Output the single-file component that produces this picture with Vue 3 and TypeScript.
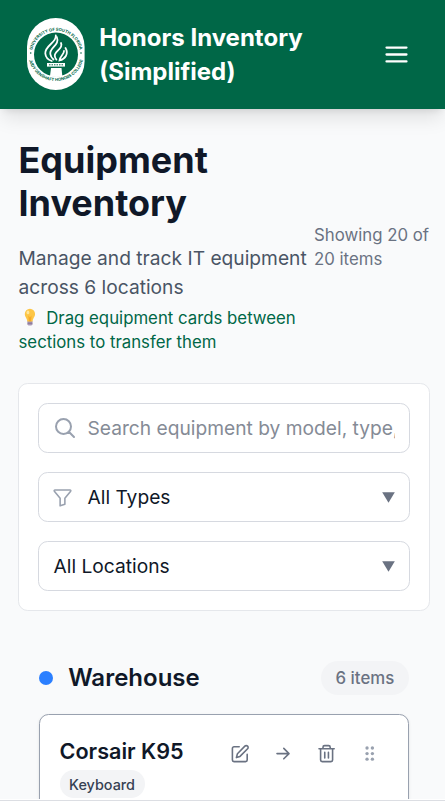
<script setup lang="ts">
import { ref } from 'vue'

interface Equipment {
  name: string
  type: string
}

const search = ref('')
const filters = ref([
  { label: 'All Types', icon: true },
  { label: 'All Locations', icon: false },
])
const items = ref<Equipment[]>([{ name: 'Corsair K95', type: 'Keyboard' }])
</script>

<template>
  <div class="page">
    <header class="header">
      <div class="brand">
        <svg class="seal" viewBox="0 0 58 72" aria-label="University seal">
          <defs>
            <path id="seal-top" d="M5.200 42a24.300 24.300 0 1 1 47.600 0" />
            <path id="seal-bottom" d="M1.500 32a27.700 27.700 0 1 0 55 0" />
          </defs>
          <rect width="57.6" height="72" rx="28.8" fill="#fff" />
          <circle cx="29" cy="36.500" r="22" fill="#006747" />
          <text class="seal-text" text-anchor="middle"><textPath href="#seal-top" startOffset="50%">UNIVERSITY OF SOUTH FLORIDA</textPath></text>
          <text class="seal-text" text-anchor="middle"><textPath href="#seal-bottom" startOffset="50%">JUDY GENSHAFT HONORS COLLEGE</textPath></text>
          <circle cx="3.7" cy="35" r=".8" fill="#006747" />
          <circle cx="54" cy="35" r=".8" fill="#006747" />
          <g fill="none" stroke="#fff" stroke-width="1.8" stroke-linecap="round">
            <path d="M28.800 17.500c1 7-11 10-10.500 18 .4 4 3 6.500 6.500 7.500" />
            <path d="M29.800 19c3.500 8-7.500 10.500-6.500 17 .3 2.500 1.500 4 3.200 5.500" />
            <path d="M34 25c2.800 6-7 8-6.200 13 .2 1.500.8 2.800 1.600 3.600" />
            <path d="M38.500 30c3.500 6-.5 11-6 12.500 .5-4.500 4.500-6 4.500-9.500" />
          </g>
          <path d="M20 45h18v3.600H20z" fill="#fff" />
          <path d="M22 46.800h14" stroke="#006747" stroke-width="1" stroke-dasharray="1.500 1" />
          <path d="M24 50h10.500l.8 8q-6 2-12.300 0z" fill="#fff" />
        </svg>
        <h1 class="brand-name">Honors Inventory (Simplified)</h1>
      </div>
      <button class="menu" aria-label="Menu">
        <svg viewBox="0 0 24 24"><path d="M3.750 6.250h16.500M3.750 12h16.500M3.750 17.750h16.500" /></svg>
      </button>
    </header>

    <main class="main">
      <section class="intro">
        <div class="intro-copy">
          <h2 class="title">Equipment Inventory</h2>
          <p class="lead">Manage and track IT equipment across 6 locations</p>
          <p class="tip">
            <svg class="bulb" viewBox="0 0 24 20">
              <path d="M8.700 13.500h5.400v4q-2.700 2-5.400 0z" fill="#a999b5" />
              <path d="M6 6.300a5.400 5.400 0 0 1 10.800 0c0 3.500-2.400 4-2.600 8H8.600C8.400 10.300 6 9.800 6 6.300z" fill="#fdc646" />
              <path d="M9.700 8l1.700 2 1.700-2-.6 6h-2.200z" fill="#f7a928" />
              <ellipse cx="9.300" cy="4.700" rx="1.500" ry="2" fill="#ffe69a" />
              <path d="M9 16h5" stroke="#76658b" stroke-width=".8" />
            </svg>
            Drag equipment cards between sections to transfer them
          </p>
        </div>
        <p class="count">Showing 20 of 20 items</p>
      </section>

      <section class="filters">
        <label class="field">
          <svg class="field-icon search-icon" viewBox="0 0 24 24"><path d="m21 21-5.197-5.197m0 0A7.500 7.500 0 1 0 5.196 5.196a7.500 7.500 0 0 0 10.607 10.607Z" /></svg>
          <input v-model="search" class="search" placeholder="Search equipment by model, type, serial..." />
        </label>
        <button v-for="filter in filters" :key="filter.label" class="field select">
          <svg v-if="filter.icon" class="field-icon funnel" viewBox="0 0 24 24"><path d="M2.500 2.500h19a1 1 0 0 1 .8 1.600L15 13v7.500L9 22.500V13L1.700 4.100A1 1 0 0 1 2.500 2.500Z" /></svg>
          <span class="select-label">{{ filter.label }}</span>
          <svg class="caret" viewBox="0 0 13 11"><path d="M.2.300h12.600L6.500 10.800z" /></svg>
        </button>
      </section>

      <section class="location">
        <div class="location-head">
          <span class="dot"></span>
          <h3 class="location-name">Warehouse</h3>
          <span class="location-count">6 items</span>
        </div>
        <article v-for="item in items" :key="item.name" class="card">
          <div>
            <h4 class="card-name">{{ item.name }}</h4>
            <span class="card-type">{{ item.type }}</span>
          </div>
          <div class="actions">
            <svg viewBox="0 0 24 24"><path d="M11.500 3.500H5a2 2 0 0 0-2 2V20a2 2 0 0 0 2 2h14.500a2 2 0 0 0 2-2v-7M18.600 2.700a2.300 2.300 0 0 1 3.400 3.300L12.500 15.500 8 17l1.300-4.800Z" /></svg>
            <svg viewBox="0 0 24 24"><path d="M13.500 5.500 20 12l-6.500 6.500M20 12H5" /></svg>
            <svg viewBox="0 0 24 24"><path d="M2.500 6h19M4.500 6v14a2 2 0 0 0 2 2h11a2 2 0 0 0 2-2V6M7.500 6V4a2 2 0 0 1 2-2h5a2 2 0 0 1 2 2v2M9.700 10.500v7M14.300 10.500v7" /></svg>
            <svg class="grip" viewBox="0 0 24 24">
              <template v-for="y in [5, 12, 19]" :key="y">
                <circle cx="8.800" :cy="y" r="2.100" />
                <circle cx="15.500" :cy="y" r="2.100" />
              </template>
            </svg>
          </div>
        </article>
      </section>
    </main>
    <div class="bottom-edge"></div>
  </div>
</template>

<style>
html,
body {
  margin: 0;
  overflow: hidden;
}
</style>

<style scoped>
* {
  box-sizing: border-box;
}
h1, h2, h3, h4, p {
  margin: 0;
}
button {
  font: inherit;
  color: inherit;
  background: none;
  border: 0;
  padding: 0;
}
svg {
  display: block;
  flex: none;
}
.page {
  display: flex;
  flex-direction: column;
  height: 801px;
  overflow: hidden;
  background: #f9fafb;
  color: #101828;
  font-family: Inter, "Liberation Sans", sans-serif;
  font-size: 19.2px;
  line-height: 28.8px;
}
.header {
  position: relative;
  display: flex;
  flex: none;
  align-items: center;
  justify-content: space-between;
  height: 109.400px;
  padding: 0 34px 0 27.400px;
  background: #006747;
  color: #fff;
  box-shadow: 0 12px 18px -3px rgb(0 0 0 / 10%), 0 5px 7px -4px rgb(0 0 0 / 10%);
}
.brand {
  display: flex;
  align-items: center;
  gap: 13.800px;
}
.seal {
  width: 58px;
  height: 72px;
  margin-bottom: 1px;
}
.seal-text {
  font-size: 4.100px;
  font-weight: 700;
  fill: #006747;
}
.brand-name {
  width: 220px;
  font-size: 24px;
  font-weight: 700;
  line-height: 33.600px;
}
.menu svg {
  width: 29px;
  height: 29px;
  fill: none;
  stroke: #fff;
  stroke-width: 1.900;
  stroke-linecap: round;
}
.main {
  flex: 1;
  min-height: 0;
  overflow: hidden;
  padding: 29.600px 15px 0 18px;
}
.intro {
  display: flex;
  align-items: center;
  justify-content: space-between;
  padding-left: .500px;
}
.intro-copy {
  width: 295px;
}
.title {
  width: 230px;
  font-size: 36px;
  font-weight: 700;
  line-height: 43.200px;
}
.lead {
  margin-top: 18.600px;
  color: #4a5565;
}
.tip {
  font-size: 16.800px;
  line-height: 24px;
  margin-top: 4.600px;
  color: #006747;
}
.bulb {
  display: inline-block;
  width: 23px;
  height: 19px;
  vertical-align: -3px;
}
.count {
  width: 116px;
  font-size: 16.800px;
  line-height: 24px;
  color: #6a7282;
}
.filters {
  display: flex;
  flex-direction: column;
  gap: 19px;
  margin-top: 29px;
  padding: 19px;
  border: 1px solid #e5e7eb;
  border-radius: 9.600px;
  background: #fff;
}
.field {
  display: flex;
  align-items: center;
  height: 50px;
  padding: 0 14px;
  border: 1px solid #d6d9e0;
  border-radius: 9.600px;
}
.field-icon {
  width: 24px;
  height: 24px;
  margin-right: 10.500px;
  fill: none;
  stroke: #99a1af;
  stroke-width: 2;
  stroke-linecap: round;
  stroke-linejoin: round;
}
.funnel {
  width: 19px;
  height: 19px;
  margin-right: 15px;
}
.search {
  flex: 1;
  min-width: 0;
  padding: 0;
  border: 0;
  outline: 0;
  background: none;
  font: inherit;
}
.search::placeholder {
  color: #858b96;
}
.select-label {
  flex: 1;
  padding-left: .5px;
  text-align: left;
}
.caret {
  width: 13px;
  height: 11px;
  fill: #6a7282;
}
.location {
  padding: 50px 21px 0 21px;
}
.location-head {
  display: flex;
  align-items: center;
  height: 34px;
  margin-bottom: 19px;
}
.dot {
  width: 14.400px;
  height: 14.400px;
  border-radius: 50%;
  background: #2b7fff;
}
.location-name {
  flex: 1;
  margin-left: 14.800px;
  font-size: 24px;
  font-weight: 600;
}
.location-count {
  padding: 5px 14.800px;
  border-radius: 99px;
  background: #f3f4f6;
  color: #6a7282;
  font-size: 16.800px;
  font-weight: 500;
  line-height: 24px;
}
.card {
  display: flex;
  justify-content: space-between;
  height: 180px;
  padding: 21px 29px 0 19.500px;
  border: 1px solid #99a1af;
  border-radius: 9.600px;
  background: #fff;
  box-shadow: 0 1px 3px rgb(0 0 0 / 10%);
}
.card-name {
  font-size: 21.600px;
  font-weight: 600;
  line-height: 30px;
}
.card-type {
  display: block;
  width: max-content;
  margin-top: 4px;
  padding: 4.500px 9.600px;
  border-radius: 99px;
  background: #f3f4f6;
  color: #364153;
  font-size: 14.400px;
  font-weight: 500;
  line-height: 19.200px;
}
.actions {
  display: flex;
  gap: 24px;
  height: 34px;
  align-items: center;
}
.actions svg {
  width: 19.200px;
  height: 19.200px;
  fill: none;
  stroke: #6a7282;
  stroke-width: 2;
  stroke-linecap: round;
  stroke-linejoin: round;
}
.actions .grip {
  fill: #99a1af;
  stroke: none;
}
.bottom-edge {
  flex: none;
  height: 2px;
  background: #dcdee3;
  border-top: 1px solid #fff;
}
</style>
